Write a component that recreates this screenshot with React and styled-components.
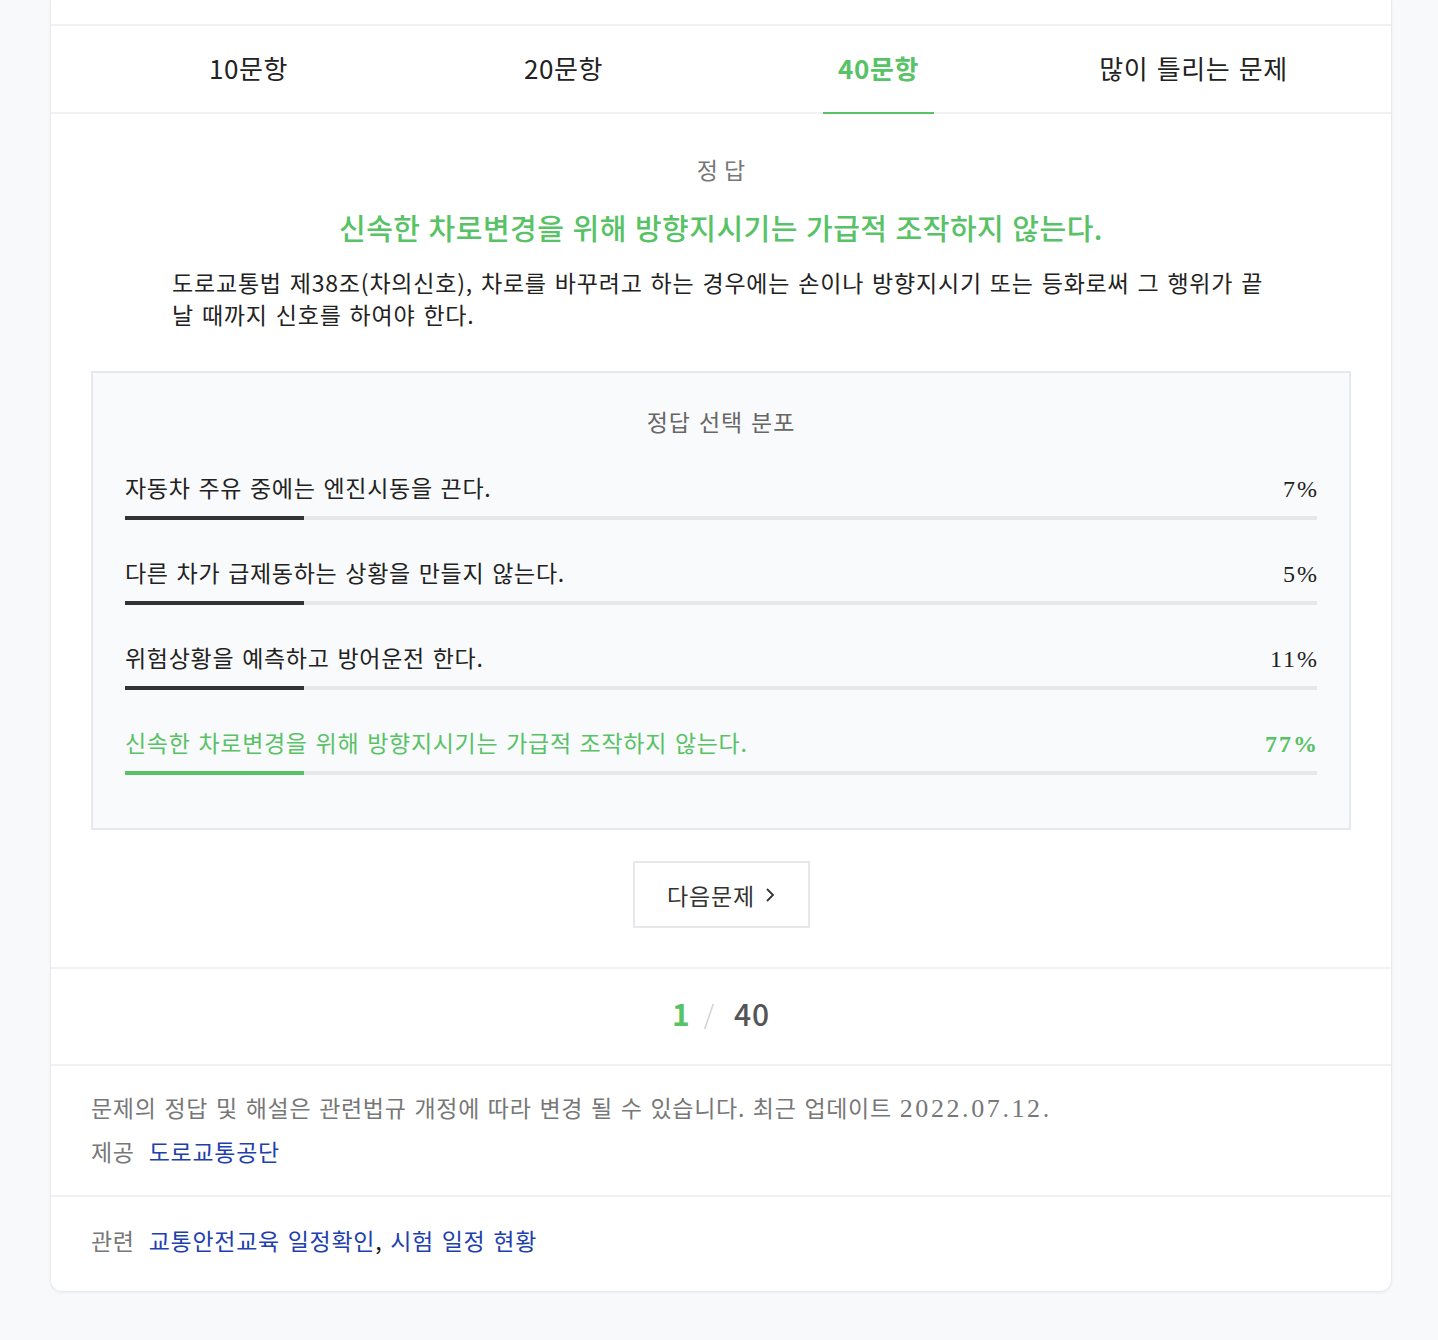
import React from 'react';
import styled, { createGlobalStyle } from 'styled-components';

const GREEN = '#58c266';
const SANS = '"Noto Sans CJK KR", "Noto Sans", sans-serif';
const SERIF = '"Liberation Serif", "Noto Sans CJK KR", serif';

const GlobalStyle = createGlobalStyle`
  body {
    margin: 0;
    background: #f8f9fa;
    font-family: ${SANS};
    color: #222;
  }
`;

const Page = styled.div`
  padding: 0 46px 49px 50px;
`;

const Card = styled.div`
  background: #fff;
  border: 1px solid #e8eaed;
  border-top: none;
  border-radius: 0 0 12px 12px;
  box-shadow: 0 1px 3px rgba(0, 0, 0, 0.05);
`;

const TopStub = styled.div`
  height: 24px;
  border-bottom: 2px solid #f0f1f3;
`;

const Tabs = styled.div`
  display: grid;
  grid-template-columns: repeat(4, 1fr);
  padding: 0 40px;
  border-bottom: 2px solid #f0f1f3;
`;

const Tab = styled.div`
  position: relative;
  height: 86px;
  box-sizing: border-box;
  padding-bottom: 4px;
  display: flex;
  align-items: center;
  justify-content: center;
  font-size: 26px;
  font-weight: ${(p) => (p.$active ? 700 : 400)};
  color: ${(p) => (p.$active ? GREEN : '#222')};
  letter-spacing: 0.6px;
  word-spacing: 2px;

  &::after {
    content: '';
    display: ${(p) => (p.$active ? 'block' : 'none')};
    position: absolute;
    bottom: -2px;
    left: 50%;
    width: 111px;
    margin-left: -56px;
    height: 2px;
    background: ${GREEN};
  }
`;

const Body = styled.div`
  padding: 41px 40px 39px;
  border-bottom: 2px solid #f0f1f3;
`;

const AnswerLabel = styled.div`
  text-align: center;
  font-size: 23px;
  line-height: 28px;
  color: #777;
  letter-spacing: 6px;
  text-indent: 6px;
`;

const AnswerTitle = styled.div`
  margin-top: 24px;
  text-align: center;
  font-size: 29px;
  line-height: 40px;
  color: ${GREEN};
  font-weight: 500;
  letter-spacing: 0.5px;
  word-spacing: 1px;
`;

const Explain = styled.p`
  margin: 19px 0 0;
  padding: 0 78px 0 81px;
  font-size: 23px;
  line-height: 32px;
  color: #222;
  word-break: break-all;
  letter-spacing: 0.8px;
  word-spacing: 2px;
`;

const DistBox = styled.div`
  margin-top: 41px;
  border: 2px solid #e6e8eb;
  background: #f9fafb;
  padding: 34px 32px 53px;
`;

const DistTitle = styled.div`
  text-align: center;
  font-size: 23px;
  line-height: 28px;
  color: #666;
  letter-spacing: 0.9px;
  word-spacing: 2px;
  margin-bottom: 37px;
`;

const Rows = styled.div`
  display: flex;
  flex-direction: column;
  gap: 37px;
`;

const Row = styled.div`
  display: flex;
  flex-direction: column;
`;

const RowHead = styled.div`
  display: flex;
  justify-content: space-between;
  align-items: center;
  height: 30px;
  font-size: 23px;
  color: ${(p) => (p.$correct ? GREEN : '#222')};
  letter-spacing: 0.7px;
  word-spacing: 2px;
`;

const Percent = styled.span`
  font-family: ${SERIF};
  font-size: 24px;
  letter-spacing: 2px;
  margin-right: -2px;
  padding-top: 4px;
  font-weight: ${(p) => (p.$correct ? 700 : 400)};
  color: ${(p) => (p.$correct ? GREEN : '#222')};
`;

const Track = styled.div`
  margin-top: 14px;
  height: 4px;
  background: #e5e7ea;
`;

const Fill = styled.div`
  width: 179px;
  height: 100%;
  background: ${(p) => (p.$correct ? GREEN : '#333')};
`;

const NextWrap = styled.div`
  display: flex;
  justify-content: center;
  margin-top: 31px;
`;

const NextButton = styled.button`
  width: 177px;
  height: 67px;
  display: flex;
  align-items: center;
  justify-content: center;
  gap: 10px;
  background: #fff;
  border: 2px solid #e6e8eb;
  font-family: ${SANS};
  font-size: 23px;
  color: #333;
  letter-spacing: 0.8px;
  cursor: pointer;
`;

const Pager = styled.div`
  height: 97px;
  padding-bottom: 8px;
  box-sizing: border-box;
  display: flex;
  align-items: center;
  justify-content: center;
  gap: 14px;
  font-size: 30px;
  border-bottom: 2px solid #f0f1f3;
`;

const PageCur = styled.span`
  color: ${GREEN};
  font-weight: 700;
`;

const PageSep = styled.span`
  color: #ccc;
  font-weight: 200;
  font-size: 26px;
`;

const PageTotal = styled.span`
  color: #555;
  font-weight: 500;
  margin-left: 6px;
  letter-spacing: 1px;
`;

const Info = styled.div`
  padding: ${(p) => p.$pad};
  border-bottom: ${(p) => (p.$last ? 'none' : '2px solid #f0f1f3')};
  font-size: 23px;
  line-height: 42px;
  color: #777;
  letter-spacing: 0.7px;
  word-spacing: 2px;
`;

const Serif = styled.span`
  font-family: ${SERIF};
  font-size: 26px;
  letter-spacing: 2.6px;
`;

const Label = styled.span`
  margin-right: 14px;
`;

const Link = styled.a`
  color: #1e40ae;
  text-decoration: none;
`;

const Comma = styled.span`
  color: #111;
`;

const choices = [
  { text: '자동차 주유 중에는 엔진시동을 끈다.', pct: '7%' },
  { text: '다른 차가 급제동하는 상황을 만들지 않는다.', pct: '5%' },
  { text: '위험상황을 예측하고 방어운전 한다.', pct: '11%' },
  { text: '신속한 차로변경을 위해 방향지시기는 가급적 조작하지 않는다.', pct: '77%', correct: true },
];

const tabs = ['10문항', '20문항', '40문항', '많이 틀리는 문제'];

export default function App() {
  return (
    <Page>
      <GlobalStyle />
      <Card>
        <TopStub />
        <Tabs>
          {tabs.map((t) => (
            <Tab key={t} $active={t === '40문항'}>{t}</Tab>
          ))}
        </Tabs>
        <Body>
          <AnswerLabel>정답</AnswerLabel>
          <AnswerTitle>신속한 차로변경을 위해 방향지시기는 가급적 조작하지 않는다.</AnswerTitle>
          <Explain>
            도로교통법 제38조(차의신호), 차로를 바꾸려고 하는 경우에는 손이나 방향지시기 또는 등화로써 그 행위가 끝날 때까지 신호를 하여야 한다.
          </Explain>
          <DistBox>
            <DistTitle>정답 선택 분포</DistTitle>
            <Rows>
              {choices.map((c) => (
                <Row key={c.text}>
                  <RowHead $correct={c.correct}>
                    <span>{c.text}</span>
                    <Percent $correct={c.correct}>{c.pct}</Percent>
                  </RowHead>
                  <Track>
                    <Fill $correct={c.correct} />
                  </Track>
                </Row>
              ))}
            </Rows>
          </DistBox>
          <NextWrap>
            <NextButton>
              다음문제
              <svg width="10" height="16" viewBox="0 0 10 16" fill="none">
                <polyline points="2,2 8,8 2,14" stroke="#333" strokeWidth="1.8" />
              </svg>
            </NextButton>
          </NextWrap>
        </Body>
        <Pager>
          <PageCur>1</PageCur>
          <PageSep>/</PageSep>
          <PageTotal>40</PageTotal>
        </Pager>
        <Info $pad="20px 40px 23px">
          <div>
            문제의 정답 및 해설은 관련법규 개정에 따라 변경 될 수 있습니다. 최근 업데이트 <Serif>2022.07.12.</Serif>
          </div>
          <div>
            <Label>제공</Label>
            <Link href="#">도로교통공단</Link>
          </div>
        </Info>
        <Info $pad="22px 40px 30px" $last>
          <Label>관련</Label>
          <Link href="#">교통안전교육 일정확인</Link>
          <Comma>, </Comma>
          <Link href="#">시험 일정 현황</Link>
        </Info>
      </Card>
    </Page>
  );
}
